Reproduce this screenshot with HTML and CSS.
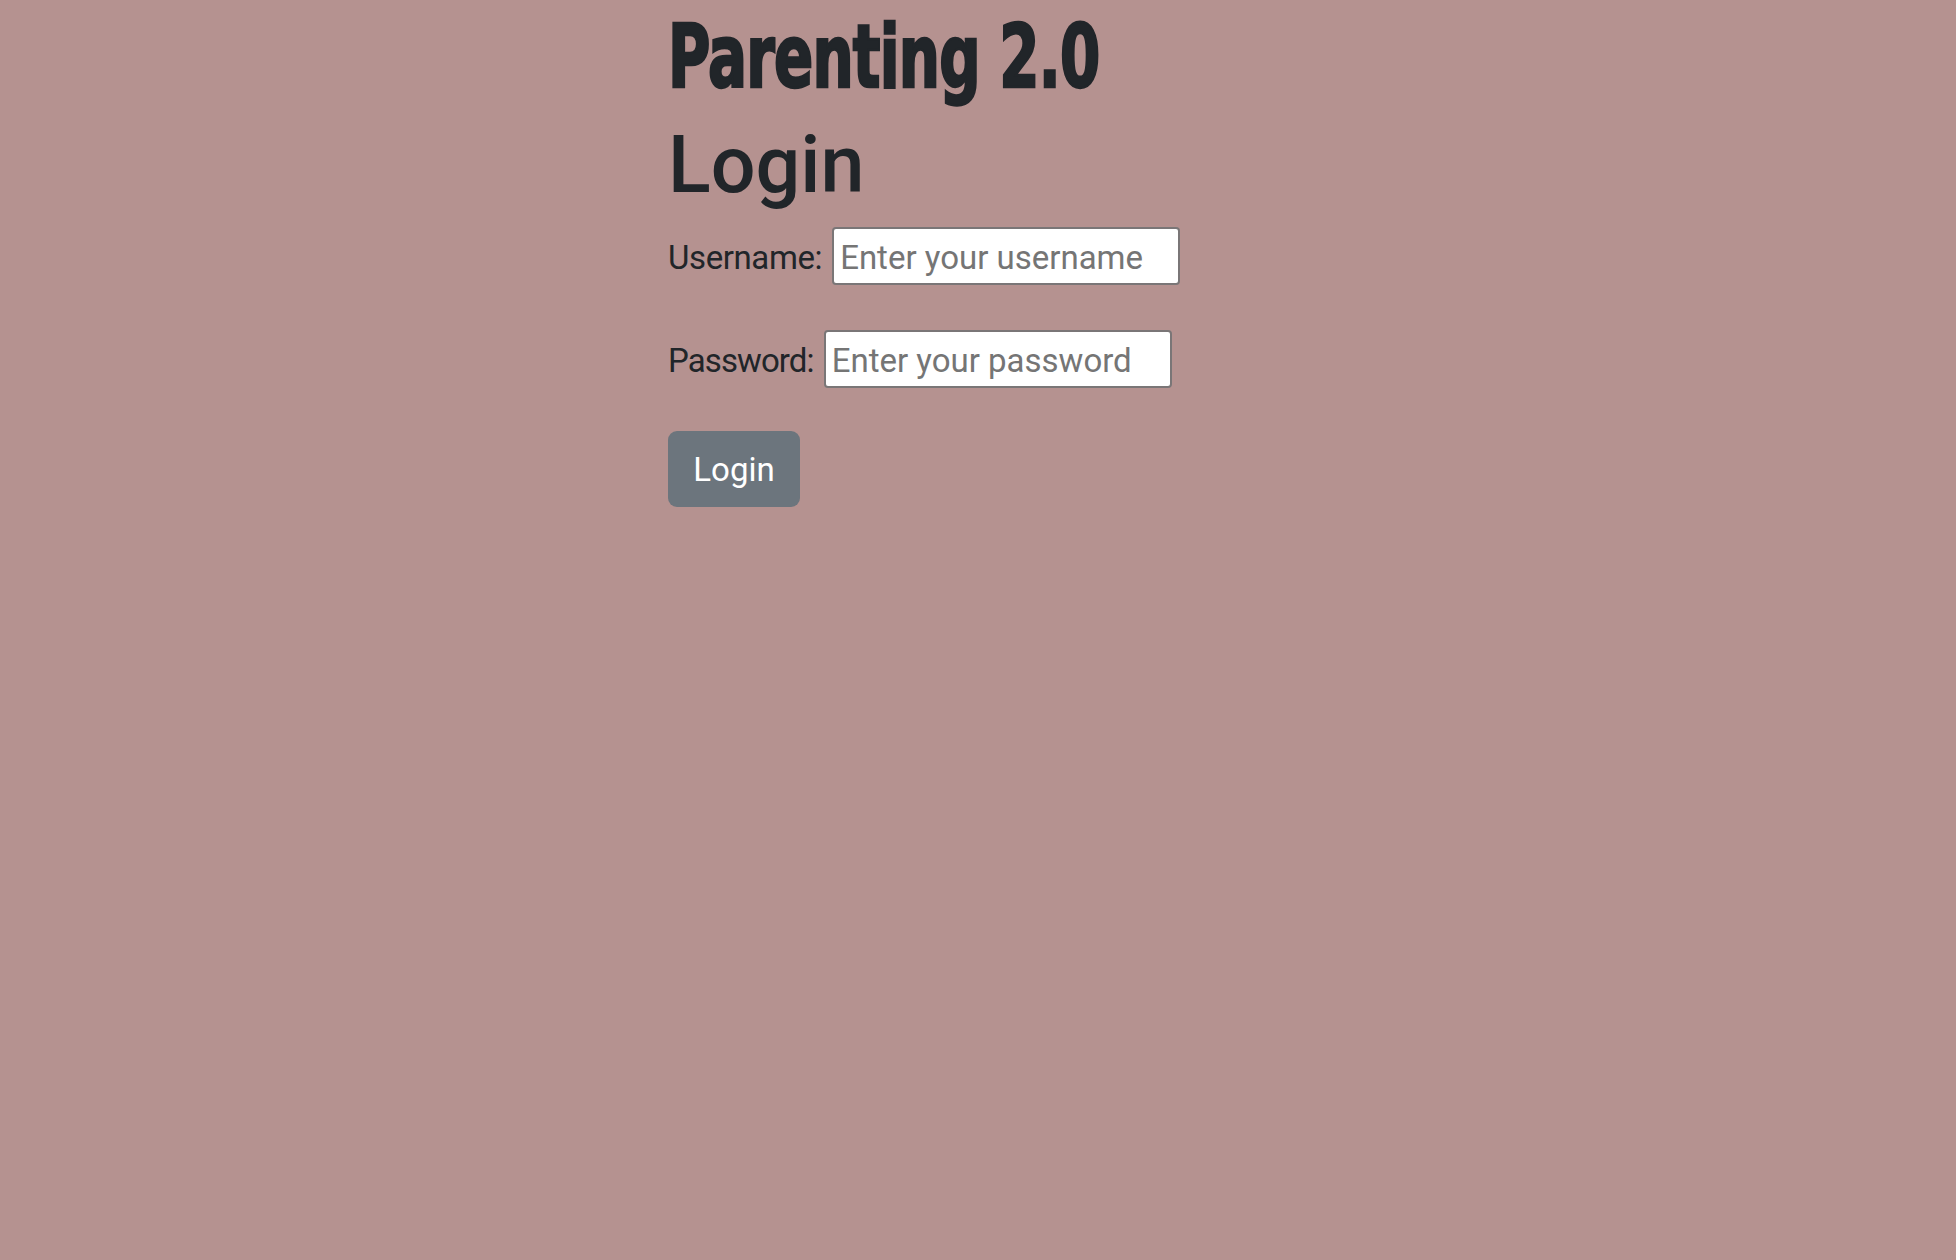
FILE: index.html
```html
<!DOCTYPE html>
<html lang="en">
<head>
<meta charset="utf-8">
<title>Parenting 2.0 - Login</title>
<link rel="stylesheet" href="styles.css">
</head>
<body>
<main class="container">
  <h1 class="brand">Parenting 2.0</h1>
  <h2 class="heading">Login</h2>
  <form class="login-form">
    <div class="field field-user">
      <label for="username" class="field-label">Username:</label>
      <input id="username" class="field-input" type="text" placeholder="Enter your username">
    </div>
    <div class="field field-pass">
      <label for="password" class="field-label">Password:</label>
      <input id="password" class="field-input" type="password" placeholder="Enter your password">
    </div>
    <button type="submit" class="btn">Login</button>
  </form>
</main>
</body>
</html>
```
FILE: styles.css
```css
html, body {
  margin: 0;
  padding: 0;
}
body {
  background: #b59290;
  color: #212529;
  font-family: Roboto, Inter, "Liberation Sans", sans-serif;
  min-height: 1260px;
}
.container {
  width: 620px;
  margin: 0 auto;
}
.brand {
  margin: 0;
  padding-top: 2px;
  font-family: "DejaVu Sans Condensed", "DejaVu Sans", sans-serif;
  font-weight: 700;
  font-stretch: condensed;
  font-size: 88px;
  line-height: 110px;
  transform: scaleX(0.73);
  transform-origin: left center;
  white-space: nowrap;
  letter-spacing: -1px;
  -webkit-text-stroke: 2.5px #212529;
}
.heading {
  margin: 0;
  font-weight: 500;
  font-size: 79px;
  line-height: 107px;
}
.login-form {
  display: flex;
  flex-direction: column;
  align-items: flex-start;
  padding-top: 8px;
}
.field {
  display: flex;
  align-items: baseline;
  gap: 10px;
}
.field-user {
  margin-bottom: 45px;
}
.field-pass {
  margin-bottom: 43px;
}
.field-label {
  font-size: 33px;
  letter-spacing: -0.4px;
}
.field-pass .field-label {
  letter-spacing: -0.9px;
}
.field-input {
  box-sizing: border-box;
  width: 348px;
  height: 58px;
  border: 2px solid #7a7677;
  border-radius: 4px;
  background: #fff;
  padding: 3px 6px 0;
  font-family: Roboto, Inter, sans-serif;
  font-size: 33px;
  color: #212529;
  outline: none;
}
.field-input::placeholder {
  color: #757575;
}
.btn {
  width: 132px;
  height: 76px;
  border: 0;
  border-radius: 9px;
  background: #6c757d;
  color: #fff;
  font-family: Roboto, Inter, sans-serif;
  font-size: 33px;
  padding: 0;
}
```
